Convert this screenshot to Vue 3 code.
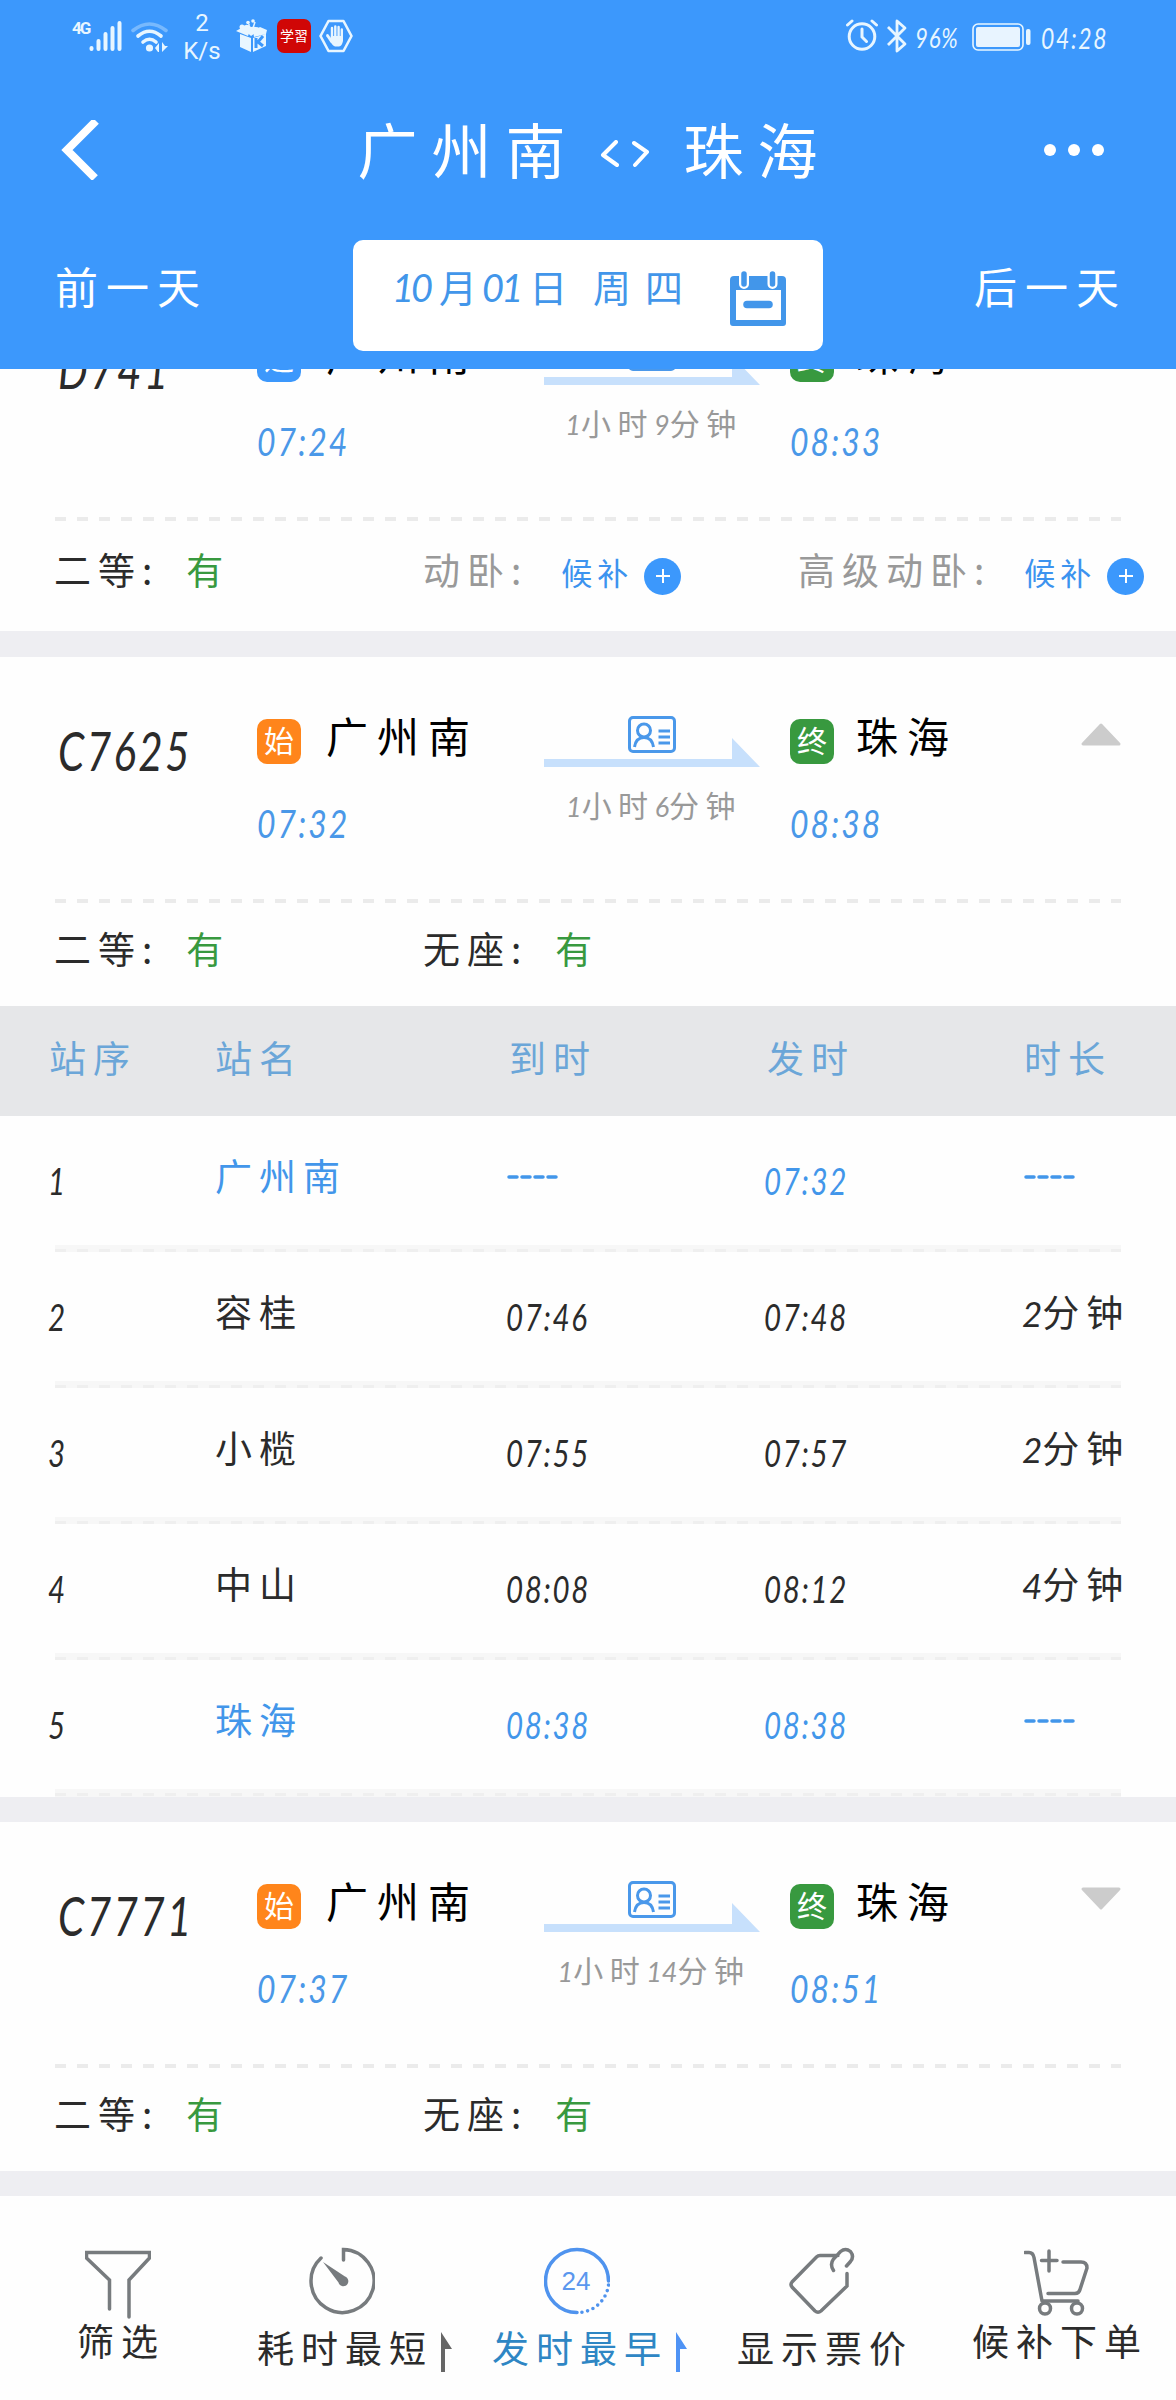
<script setup>
import { ref, h } from 'vue';

const trains = ref([
  {
    code: 'D741',
    from: { name: '广州南', badge: '过', type: 'pass', time: '07:24' },
    to: { name: '珠海', badge: '终', type: 'end', time: '08:33' },
    duration: '1小时9分钟',
    seats: [
      { label: '二等', value: '有' },
      { label: '动卧', waitlist: true },
      { label: '高级动卧', waitlist: true },
    ],
  },
  {
    code: 'C7625',
    from: { name: '广州南', badge: '始', type: 'start', time: '07:32' },
    to: { name: '珠海', badge: '终', type: 'end', time: '08:38' },
    duration: '1小时6分钟',
    seats: [
      { label: '二等', value: '有' },
      { label: '无座', value: '有' },
    ],
    stops: [
      { name: '广州南', arrive: '----', depart: '07:32', stay: '----', active: true },
      { name: '容桂', arrive: '07:46', depart: '07:48', stay: '2分钟' },
      { name: '小榄', arrive: '07:55', depart: '07:57', stay: '2分钟' },
      { name: '中山', arrive: '08:08', depart: '08:12', stay: '4分钟' },
      { name: '珠海', arrive: '08:38', depart: '08:38', stay: '----', active: true },
    ],
  },
  {
    code: 'C7771',
    from: { name: '广州南', badge: '始', type: 'start', time: '07:37' },
    to: { name: '珠海', badge: '终', type: 'end', time: '08:51' },
    duration: '1小时14分钟',
    seats: [
      { label: '二等', value: '有' },
      { label: '无座', value: '有' },
    ],
  },
]);

const columns = ['站序', '站名', '到时', '发时', '时长'];

const tabs = [
  { icon: 'filter', label: '筛选' },
  { icon: 'timer', label: '耗时最短', sort: true, low: true },
  { icon: 'clock', label: '发时最早', sort: true, low: true, active: true },
  { icon: 'tag', label: '显示票价', low: true },
  { icon: 'cart', label: '候补下单' },
];

// wraps the digits of a string in <i>, so they can be spaced apart from the characters
function Mixed({ text }) {
  return h('span', { class: 'mixed' }, text.split(/(\d+)/).filter(Boolean).map((part) => (
    /\d/.test(part) ? h('i', part) : h('b', part)
  )));
}
Mixed.props = ['text'];
</script>

<template>
  <div class="app">
    <header class="header">
      <div class="status">
        <span class="net">4G</span>
        <svg class="signal" width="33" height="32" viewBox="0 0 33 32">
          <g stroke="#e8f6ff" stroke-width="4" stroke-linecap="round">
            <path d="M2.5 29v-1M9.5 29v-8M16.5 29V14M23.5 29V8M30.5 29V3" />
          </g>
        </svg>
        <svg class="wifi" width="38" height="31" viewBox="0 0 38 31">
          <g fill="none" stroke="#e8f6ff" stroke-width="3.6" stroke-linecap="round">
            <path d="M2 8.500Q18.500-4.500 35 8.500" opacity=".35" />
            <path d="M7 14Q18.500 4.500 30 14M12 20Q18.500 14.500 25 20" />
          </g>
          <circle cx="18.500" cy="26" r="3.600" fill="#e8f6ff" />
          <path d="M28 21v9h-1l-3-4zM31 20v10l6-6h-3z" fill="#e8f6ff" />
        </svg>
        <div class="speed"><span>2</span><span>K/s</span></div>
        <svg class="box" width="32" height="34" viewBox="0 0 32 34">
          <path d="M4 15l11 4v14L4 28zM17 19l13-4v12l-13 6zM0 12l9-5 6 2-3 8zM17 12l7-4 7 3-1 4-12 3z" fill="#e8f6ff" />
          <path d="M6 9Q10 3 15 8Q21 7 25 10L15 17z" fill="#e8f6ff" />
          <path d="M13 10V5M17 9l2-6" stroke="#e8f6ff" stroke-width="1.500" />
          <circle cx="6" cy="8" r="2.500" fill="#e8f6ff" />
          <circle cx="12" cy="3.500" r="1.800" fill="#e8f6ff" />
          <circle cx="17" cy="2" r="1.800" fill="#e8f6ff" />
          <path d="M20 19v10M27 17l-5 6 5 4" fill="none" stroke="#3c98fc" stroke-width="3" />
        </svg>
        <span class="study">学習</span>
        <svg class="hand" width="34" height="34" viewBox="0 0 34 34">
          <path d="M9.500 2h15l8 15-8 15h-15l-8-15z" fill="none" stroke="#e8f6ff" stroke-width="2.600" stroke-linejoin="round" />
          <g fill="none" stroke="#e8f6ff" stroke-linecap="round">
            <path d="M13 9v11M16.300 7.500V20M19.600 8v12M22.800 10.500V21" stroke-width="2.400" />
            <path d="M8.500 16.500l4 6" stroke-width="2.800" />
          </g>
          <path d="M12 17h12v5q-1 5-4 5.500h-4q-3-1-5-6z" fill="#e8f6ff" />
        </svg>
        <div class="right">
          <svg width="34" height="32" viewBox="0 0 34 32">
            <g fill="none" stroke="#e8f6ff" stroke-width="3" stroke-linecap="round">
              <circle cx="17" cy="17.500" r="12.800" />
              <path d="M2.500 6l4.500-4M31.500 6L27 2M17 10v8l4.500 4.500" />
            </g>
          </svg>
          <svg class="bluetooth" width="22" height="34" viewBox="0 0 22 34">
            <path d="M2 8l17 17-8 7V2l8 7L2 26" fill="none" stroke="#e8f6ff" stroke-width="2.800" stroke-linejoin="round" />
          </svg>
          <span class="num percent">96%</span>
          <svg class="battery" width="59" height="28" viewBox="0 0 59 28">
            <rect x="1" y="1" width="50" height="26" rx="5" fill="none" stroke="#e8f6ff" stroke-width="1.600" />
            <rect x="4" y="4" width="44" height="20" rx="2" fill="#e8f4ff" />
            <rect x="54" y="6" width="4.500" height="16" rx="2" fill="#e8f6ff" />
          </svg>
          <span class="num clock-time">04:28</span>
        </div>
      </div>

      <div class="title-row">
        <svg class="back" width="42" height="60" viewBox="0 0 42 60">
          <path d="M35 1L6 30l28 28" fill="none" stroke="#fff" stroke-width="8" />
        </svg>
        <h1 class="title">
          <span>广州南</span>
          <svg width="50" height="28" viewBox="0 0 50 28">
            <path d="M16 2L3 15l14 10M34 3l13 9-12 13" fill="none" stroke="#fff" stroke-width="4" stroke-linecap="round" stroke-linejoin="round" />
          </svg>
          <span>珠海</span>
        </h1>
        <div class="more"><i></i><i></i><i></i></div>
      </div>

      <div class="date-row">
        <span class="day">前一天</span>
        <div class="date">
          <Mixed text="10月01日" />
          <span class="week">周四</span>
          <svg width="56" height="58" viewBox="0 0 56 58">
            <path d="M4 6h48q4 0 4 4v43q0 3-3 3H3q-3 0-3-3V10q0-4 4-4zM6 20v30h45V20z" fill="#4296ea" fill-rule="evenodd" />
            <g stroke-linecap="round">
              <path d="M14 4v10M42.500 4v10" stroke="#fff" stroke-width="10" />
              <path d="M14 4v10M42.500 4v10" stroke="#4296ea" stroke-width="5.500" />
              <path d="M17 34.500h22" stroke="#4296ea" stroke-width="7.500" />
            </g>
          </svg>
        </div>
        <span class="day">后一天</span>
      </div>
    </header>

    <main class="list">
      <section v-for="train in trains" :key="train.code" class="card">
        <div class="trip">
          <div class="code"><span class="num">{{ train.code }}</span></div>
          <div class="station from">
            <div class="place">
              <span class="badge" :class="train.from.type">{{ train.from.badge }}</span>
              <span class="name">{{ train.from.name }}</span>
            </div>
            <span class="num time">{{ train.from.time }}</span>
          </div>
          <div class="journey">
            <svg width="216" height="52" viewBox="0 0 216 52">
              <path d="M0 43h188V22l28 29H0z" fill="#c7e0fc" />
              <g fill="none" stroke="#4a98ea" stroke-width="3">
                <rect x="85.500" y="1.500" width="45" height="34" rx="3.500" />
                <circle cx="100" cy="14.500" r="6.500" />
                <path d="M90.500 31q1.500-9.500 9.500-9.500t9.500 9.500M114.500 15H126M114.500 21H126M114.500 27H126" />
              </g>
            </svg>
            <Mixed class="duration" :text="train.duration" />
          </div>
          <div class="station">
            <div class="place">
              <span class="badge" :class="train.to.type">{{ train.to.badge }}</span>
              <span class="name">{{ train.to.name }}</span>
            </div>
            <span class="num time">{{ train.to.time }}</span>
          </div>
          <svg class="toggle" :class="{ open: train.stops }" width="42" height="24" viewBox="0 0 42 24">
            <path d="M3 2h36L21 21z" fill="#ccc" stroke="#ccc" stroke-width="3" stroke-linejoin="round" />
          </svg>
        </div>
        <div class="dashes"></div>
        <div class="seats" :class="{ tall: train.seats.some((s) => s.waitlist) }">
          <div v-for="seat in train.seats" :key="seat.label" class="seat">
            <span class="seat-label" :class="{ muted: seat.waitlist }">{{ seat.label }}:</span>
            <template v-if="seat.waitlist">
              <span class="wait">候补</span>
              <svg class="plus" width="37" height="37" viewBox="0 0 37 37">
                <circle cx="18.500" cy="18.500" r="18.500" fill="#3c98fc" />
                <path d="M12 18h14M19 11v14" stroke="#fff" stroke-width="2" />
              </svg>
            </template>
            <span v-else class="available">{{ seat.value }}</span>
          </div>
        </div>

        <div v-if="train.stops" class="stops">
          <div class="stop head">
            <span v-for="column in columns" :key="column">{{ column }}</span>
          </div>
          <div v-for="(stop, i) in train.stops" :key="stop.name" class="stop-row">
            <div class="stop" :class="{ active: stop.active }">
              <span class="index num">{{ i + 1 }}</span>
              <span>{{ stop.name }}</span>
              <span v-for="(value, k) in [stop.arrive, stop.depart]" :key="k">
                <svg v-if="value === '----'" class="blank" width="54" height="6" viewBox="0 0 54 6">
                  <path d="M2 3h8M15 3h8M28 3h8M41 3h8" />
                </svg>
                <span v-else class="num stop-time">{{ value }}</span>
              </span>
              <span>
                <svg v-if="stop.stay === '----'" class="blank" width="54" height="6" viewBox="0 0 54 6">
                  <path d="M2 3h8M15 3h8M28 3h8M41 3h8" />
                </svg>
                <Mixed v-else :text="stop.stay" />
              </span>
            </div>
            <div class="rule"></div>
          </div>
        </div>
      </section>
    </main>

    <nav class="tabs">
      <div v-for="tab in tabs" :key="tab.icon" class="tab" :class="{ active: tab.active, low: tab.low }">
        <svg class="icon" width="66" height="72" viewBox="0 0 66 72">
          <g v-if="tab.icon === 'filter'">
            <path d="M24.500 62V33L1.500 11V5.500h63V11L44 33v37" />
          </g>
          <g v-else-if="tab.icon === 'timer'">
            <path d="M34.500 13V2.500a31.500 31.500 0 1 1-22.500 8.500" />
            <path d="M14 15l22 14.500a5 5 0 1 1-6.500 6z" class="solid" />
          </g>
          <g v-else-if="tab.icon === 'clock'">
            <path d="M33 65.500A31.500 31.500 0 1 1 64.500 34" />
            <path d="M64.500 38A31.500 31.500 0 0 1 36 65.500" stroke-dasharray="0 5.800" stroke-width="3.600" />
            <text x="32" y="43">24</text>
          </g>
          <g v-else-if="tab.icon === 'tag'">
            <path d="M49 8.500H31q-2 0-3.500 1.500L3 35q-2 2.500 0 5L26 64q3 2.500 6 0L58 39V26.500M44.500 23.500q-4-6 0-11.500l7-7.500q5-4 10 0 4 5 0 10l-4 4.500" />
          </g>
          <g v-else>
            <path d="M1 5.500h4q4 0 5 5L18 54M18 54h36M24 46.500h27q4 0 5-4L63 21q0-6-6-6H39M17.500 13.500H33M25 4v20" />
            <circle cx="21" cy="61.500" r="5.500" />
            <circle cx="53" cy="61.500" r="5.500" />
          </g>
        </svg>
        <span class="tab-label">
          {{ tab.label }}
          <svg v-if="tab.sort" class="arrow" width="12" height="40" viewBox="0 0 12 40">
            <path d="M0 0l11 17H4v23H0z" fill="currentColor" />
          </svg>
        </span>
      </div>
    </nav>
  </div>
</template>

<style>
body {
  background: #fefefe;
}
</style>

<style scoped>
.app {
  display: flex;
  flex-direction: column;
  width: 1176px;
  height: 2400px;
  overflow: hidden;
  background: #fefefe;
  color: #2b2b2b;
  font-family: "Noto Sans CJK SC", sans-serif;
  font-weight: 400;
}

svg {
  flex: none;
}

.num {
  display: inline-block;
  font-family: Lato, sans-serif;
  font-style: italic;
  font-weight: 400;
  letter-spacing: 2.5px;
  transform: scaleX(0.82);
  transform-origin: left;
  white-space: nowrap;
}

:deep(.mixed i) {
  font-family: Lato, sans-serif;
  font-weight: 400;
}

:deep(.mixed b) {
  font-weight: inherit;
}

/* header */

.header {
  position: relative;
  z-index: 1;
  flex: none;
  height: 369px;
  background: #3c98fc;
  color: #fff;
}

.status {
  display: flex;
  align-items: flex-start;
  height: 75px;
  padding: 19px 60px 0 72px;
  box-sizing: border-box;
  color: #e8f6ff;
}

.net {
  width: 17px;
  font: 700 17px/18px Roboto, sans-serif;
  letter-spacing: -2px;
}

.signal {
  margin-top: 1px;
}

.wifi {
  margin: 3px 0 0 9px;
}

.speed {
  display: flex;
  flex-direction: column;
  width: 48px;
  margin: -10px 0 0 9px;
  font: 24px/28px Roboto, sans-serif;
  text-align: center;
}

.box {
  margin-left: 10px;
}

.study {
  width: 34px;
  height: 34px;
  margin: 0 8px 0 9px;
  border-radius: 7px;
  background: #d00606;
  color: #fff;
  font-size: 14px;
  line-height: 33px;
  text-align: center;
}

.right {
  display: flex;
  align-items: flex-start;
  width: 271px;
  margin-left: auto;
}

.bluetooth {
  margin-left: 7px;
}

.percent {
  flex: none;
  width: 54px;
  margin-left: 7px;
  font-size: 27px;
  letter-spacing: 1px;
  line-height: 37px;
}

.battery {
  margin: 4px 10px 0 3px;
}

.clock-time {
  flex: none;
  font-size: 28px;
  letter-spacing: 2px;
  line-height: 38px;
}

.title-row {
  display: flex;
  align-items: center;
  justify-content: space-between;
  height: 150px;
  padding: 0 72px 0 61px;
}

.title {
  display: flex;
  align-items: center;
  margin: 0 0 0 42px;
  font-size: 60px;
  font-weight: 400;
  letter-spacing: 14px;
  line-height: 80px;
}

.title span {
  margin-top: -4px;
}

.title svg {
  margin: 8px 34px 0 20px;
}

.more {
  display: flex;
  gap: 12px;
}

.more i {
  width: 12px;
  height: 12px;
  border-radius: 50%;
  background: #fff;
}

.date-row {
  display: flex;
  justify-content: space-between;
  padding: 15px 54px 0 55px;
}

.day {
  font-size: 43px;
  font-weight: 400;
  letter-spacing: 8px;
  line-height: 90px;
}

.day:last-child {
  margin-right: -5px;
}

.date {
  display: flex;
  width: 428px;
  height: 111px;
  margin-left: -6px;
  padding-left: 42px;
  border-radius: 10px;
  background: #fff;
  color: #4296ea;
  font-size: 38px;
  line-height: 92px;
}

.date :deep(.mixed) {
  width: 198px;
  margin-left: -3px;
  margin-right: 3px;
}

.date :deep(i) {
  font-size: 38px;
  letter-spacing: -3px;
}

.date :deep(b) {
  margin: 0 5px 0 9px;
}

.week {
  width: 137px;
  letter-spacing: 14px;
}

.date svg {
  margin-top: 30px;
}

/* train list */

.list {
  flex: 1;
  min-height: 0;
  background: #eeeef2;
}

.card {
  margin-bottom: 25px;
  background: #fefefe;
}

/* the first card is scrolled partly under the header */
.card:first-child {
  margin-top: -94px;
  margin-bottom: 26px;
}

.trip {
  display: flex;
  height: 242px;
}

.code {
  width: 199px;
  padding: 61px 0 0 58px;
  font-size: 54px;
  line-height: 60px;
}

.code .num {
  letter-spacing: 3px;
  transform: scaleX(0.78);
}

.station {
  width: 290px;
  padding-top: 62px;
}

.station.from {
  width: 287px;
}

.place {
  display: flex;
  align-items: flex-start;
  height: 45px;
}

.badge {
  width: 44px;
  height: 45px;
  border-radius: 10px;
  color: #fff;
  font-size: 30px;
  font-weight: 400;
  line-height: 40px;
  text-align: center;
}

.badge.start {
  background: #ff851b;
}

.badge.end {
  background: #38993f;
}

.badge.pass {
  background: #3c98fc;
}

.name {
  margin-left: 25px;
  color: #000;
  font-size: 42px;
  font-weight: 400;
  letter-spacing: 9px;
  line-height: 31px;
}

.station:not(.from) .name {
  margin-left: 22px;
}

.time {
  margin-top: 31px;
  color: #4a98e8;
  font-size: 39px;
  line-height: 56px;
}

.journey {
  width: 246px;
  padding-top: 59px;
}

.journey svg {
  display: block;
}

.duration {
  display: block;
  width: 220px;
  margin-top: 17px;
  color: #999;
  font-size: 30px;
  letter-spacing: 6.5px;
  line-height: 38px;
  text-align: center;
}

.duration :deep(i) {
  font-size: 27px;
  letter-spacing: 0;
}

.toggle {
  margin-top: 65px;
}

.toggle.open {
  transform: scaleY(-1);
}

.dashes {
  height: 4px;
  margin: 0 55px;
  background: repeating-linear-gradient(90deg, #ebebeb 0 11px, transparent 11px 22px);
}

.seats {
  display: grid;
  grid-template-columns: 369px 375px auto;
  box-sizing: border-box;
  height: 103px;
  padding: 20px 0 0 54px;
  font-size: 37px;
  letter-spacing: 7px;
  line-height: 50px;
}

.seats.tall {
  height: 110px;
  padding-top: 23px;
}

.seat {
  display: flex;
  white-space: nowrap;
}

.seat-label {
  margin-right: 27px;
}

.muted {
  color: #999;
}

.available {
  color: #38993f;
}

.wait {
  width: 83px;
  margin-left: 6px;
  color: #3c93ef;
  font-size: 31px;
  letter-spacing: 5px;
  line-height: 55px;
}

.plus {
  margin-top: 14px;
}

/* stop table */

.stop {
  display: grid;
  grid-template-columns: 166px 294px 258px 257px auto;
  padding-left: 50px;
  height: 129px;
  font-size: 37px;
  letter-spacing: 7px;
  line-height: 119px;
  white-space: nowrap;
}

.stop > span:nth-child(2),
.stop.head > span {
  margin-left: -1px;
}

.stop.head {
  height: 110px;
  background: #e6e7e9;
  color: #6ba6d8;
  line-height: 103px;
}

.stop.active {
  color: #4296ea;
}

.stop .num {
  font-size: 36px;
  letter-spacing: 2px;
  line-height: 130px;
}

.stop .index {
  margin-left: -2px;
  color: #2b2b2b;
}

.stop .stop-time {
  display: block;
  margin-left: -4px;
}

.stop :deep(.mixed) {
  margin-left: -3px;
  letter-spacing: 7px;
}

.stop :deep(.mixed i) {
  font-size: 35px;
  letter-spacing: 0;
}

.blank {
  display: block;
  margin: 58px 0 0 -3px;
  fill: none;
  stroke: currentColor;
  stroke-width: 3.5;
  stroke-linecap: round;
}

.stop > span:last-child .blank {
  margin-left: -1px;
}

.rule {
  height: 7px;
  margin: 0 55px;
  background:
    repeating-linear-gradient(90deg, #efefef 0 11px, transparent 11px 22px) 0 4px / 100% 3px no-repeat,
    #f7f7f7;
}

.stop-row:last-child .rule {
  height: 8px;
}

/* bottom bar */

.tabs {
  display: grid;
  grid-template-columns: 236px 212px 258px 232px 238px;
  flex: none;
  height: 204px;
  background: #fefefe;
}

.tab {
  display: flex;
  flex-direction: column;
  align-items: center;
  padding-top: 51px;
  color: #2b2b2b;
}

.icon {
  fill: none;
  stroke: #777b7e;
  stroke-width: 3.5;
  stroke-linecap: round;
}

.icon .solid {
  fill: #777b7e;
  stroke: none;
}

.icon text {
  fill: #5b97ee;
  stroke: none;
  font: 26px "Liberation Sans", sans-serif;
  text-anchor: middle;
}

.tab-label {
  position: relative;
  padding-left: 6px;
  font-size: 37px;
  letter-spacing: 7px;
  line-height: 42px;
  white-space: nowrap;
}

.low .tab-label {
  margin-top: 7px;
}

.arrow {
  position: absolute;
  left: 100%;
  top: 6px;
  margin-left: 8px;
  color: #666;
}

.tab.active .tab-label {
  color: #2e86c4;
}

.tab.active .icon {
  stroke: #4f93ee;
}

.tab.active .arrow {
  color: #4f93f5;
}
</style>
